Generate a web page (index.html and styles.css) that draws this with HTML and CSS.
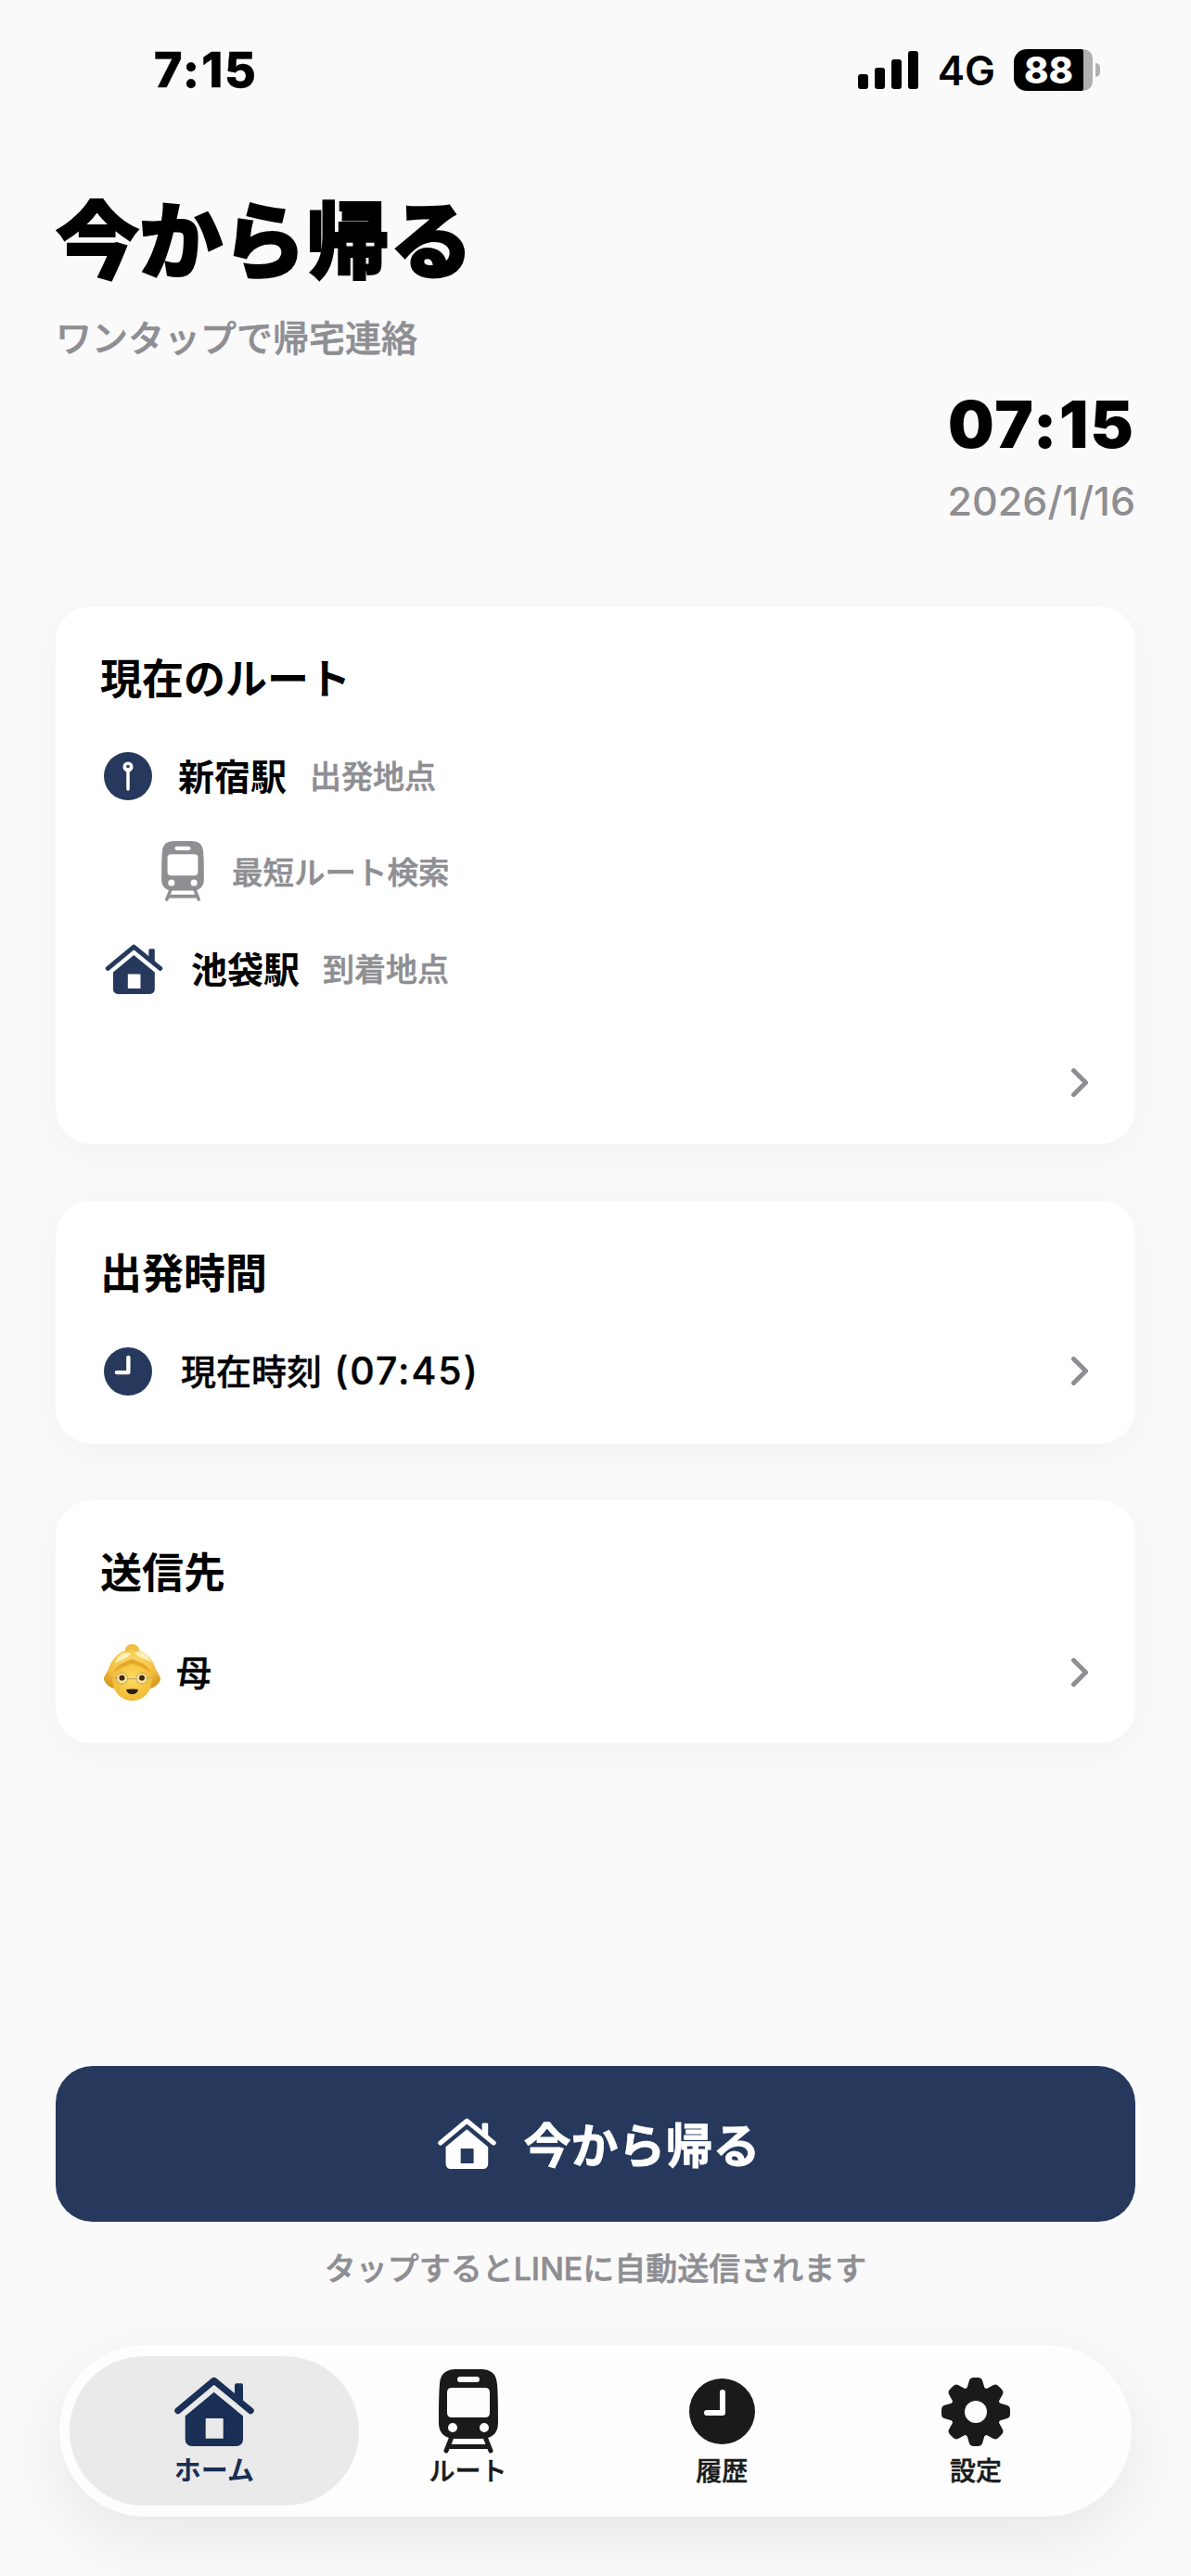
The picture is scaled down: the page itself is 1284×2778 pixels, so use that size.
FILE: index.html
```html
<!DOCTYPE html>
<html lang="ja">
<head>
<meta charset="utf-8">
<title>今から帰る</title>
<link rel="stylesheet" href="styles.css">
</head>
<body>
<svg class="sprite" aria-hidden="true">
  <defs>
    <symbol id="i-home" viewBox="0 0 86 75">
      <path class="fill" d="M65 24V9.300a2 2 0 0 1 2-2h5a2 2 0 0 1 2 2V32z"/>
      <path class="roof" d="M3.800 36.700 42.700 4.300 82.200 36.700"/>
      <path class="fill" fill-rule="evenodd" d="M42.700 16.700 74 42.500V68a7 7 0 0 1-7 7H18.700a7 7 0 0 1-7-7V42.500zM33.700 45V66.700H52.700V46a1 1 0 0 0-1-1z"/>
    </symbol>
    <symbol id="i-train" viewBox="0 0 64 91">
      <path class="fill" fill-rule="evenodd" d="M20 0H44C58 0 62 6 63 16 64 28 64 46 64 58 64 70 56 75 46 75H18C8 75 0 70 0 58 0 46 0 28 1 16 2 6 6 0 20 0ZM23 8a3 3 0 0 0 0 6H41a3 3 0 0 0 0-6ZM14 20Q9 20 9 25V47Q9 52 14 52H50Q55 52 55 47V25Q55 20 50 20ZM15 58a5 5 0 1 0 0 10 5 5 0 0 0 0-10ZM49 58a5 5 0 1 0 0 10 5 5 0 0 0 0-10Z"/>
      <path class="rail" d="M14 73 8 88M50 73 56 88M11 83.500H53"/>
    </symbol>
    <symbol id="i-clock" viewBox="0 0 71 71">
      <circle class="fill" cx="35.500" cy="35.500" r="35.500"/>
      <path class="hand" d="M36 15V37H19"/>
    </symbol>
    <symbol id="i-gear" viewBox="0 0 74 74">
      <g transform="translate(37 37)">
        <circle class="fill" r="27.500"/>
        <path class="fill" d="M-10-24-7-34Q-6-37-2-37H2Q6-37 7-34L10-24Z"/>
        <path class="fill" transform="rotate(45)" d="M-10-24-7-34Q-6-37-2-37H2Q6-37 7-34L10-24Z"/>
        <path class="fill" transform="rotate(90)" d="M-10-24-7-34Q-6-37-2-37H2Q6-37 7-34L10-24Z"/>
        <path class="fill" transform="rotate(135)" d="M-10-24-7-34Q-6-37-2-37H2Q6-37 7-34L10-24Z"/>
        <path class="fill" transform="rotate(180)" d="M-10-24-7-34Q-6-37-2-37H2Q6-37 7-34L10-24Z"/>
        <path class="fill" transform="rotate(225)" d="M-10-24-7-34Q-6-37-2-37H2Q6-37 7-34L10-24Z"/>
        <path class="fill" transform="rotate(270)" d="M-10-24-7-34Q-6-37-2-37H2Q6-37 7-34L10-24Z"/>
        <path class="fill" transform="rotate(315)" d="M-10-24-7-34Q-6-37-2-37H2Q6-37 7-34L10-24Z"/>
        <circle class="hole" r="12"/>
      </g>
    </symbol>
    <symbol id="i-chevron" viewBox="0 0 18 31">
      <path class="chev" d="M2.500 2.500 15.500 15.500 2.500 28.500"/>
    </symbol>
    <radialGradient id="hair" cx="50%" cy="30%" r="70%">
      <stop offset="0" stop-color="#fbd96a"/>
      <stop offset=".6" stop-color="#f2c043"/>
      <stop offset="1" stop-color="#d99a20"/>
    </radialGradient>
    <radialGradient id="skin" cx="50%" cy="45%" r="60%">
      <stop offset="0" stop-color="#fddc62"/>
      <stop offset="1" stop-color="#f1b62f"/>
    </radialGradient>
  </defs>
</svg>

<div class="page">
  <div class="status">
    <span class="clock-text">7:15</span>
    <div class="status-right">
      <div class="signal"><i class="b1"></i><i class="b2"></i><i class="b3"></i><i class="b4"></i></div>
      <span class="net">4G</span>
      <div class="battery"><span class="level">88</span><span class="rest"></span></div>
      <span class="nub"></span>
    </div>
  </div>

  <header class="head">
    <h1 class="title">今から帰る</h1>
    <p class="sub">ワンタップで帰宅連絡</p>
    <div class="now">
      <div class="now-time">07:15</div>
      <div class="now-date">2026/1/16</div>
    </div>
  </header>

  <main class="cards">
    <section class="card">
      <h2 class="card-title">現在のルート</h2>
      <div class="route">
        <div class="row">
          <svg class="badge" viewBox="0 0 52 52"><circle class="navy" cx="26" cy="26" r="26"/><path class="pin-stick" d="M26 18V40"/><circle class="pin-head" cx="26" cy="16" r="5.500"/><circle class="navy" cx="26" cy="15.500" r="1.800"/></svg>
          <span class="place place-a">新宿駅</span>
          <span class="hint">出発地点</span>
        </div>
        <div class="row row-train">
          <svg class="train-grey"><use href="#i-train"/></svg>
          <span class="hint hint-train">最短ルート検索</span>
        </div>
        <div class="row row-home">
          <svg class="home-navy"><use href="#i-home"/></svg>
          <span class="place place-b">池袋駅</span>
          <span class="hint">到着地点</span>
        </div>
      </div>
      <div class="card-foot"><svg class="chevron"><use href="#i-chevron"/></svg></div>
    </section>

    <section class="card">
      <h2 class="card-title">出発時間</h2>
      <div class="row row-link">
        <svg class="badge navy-icon"><use href="#i-clock"/></svg>
        <span class="value value-time">現在時刻 <span class="latin">(07:45)</span></span>
        <svg class="chevron"><use href="#i-chevron"/></svg>
      </div>
    </section>

    <section class="card">
      <h2 class="card-title">送信先</h2>
      <div class="row row-link row-person">
        <svg class="emoji" viewBox="0 0 61 61" role="img" aria-label="おばあさん">
          <circle cx="30.500" cy="8" r="8" fill="#f0bd3f"/>
          <path d="M30.500 6C16 6 8 17 5 27 2 33 0 35 0 38 2 45 9 48 15 49H46C52 48 59 45 61 38 61 35 59 33 56 27 53 17 45 6 30.500 6Z" fill="url(#hair)"/>
          <path d="M12 21C14 12 22 7 29 10 28 15 18 16 12 21ZM33 9C40 6 49 12 51 20 45 15 36 15 33 9Z" fill="#fff3c4" opacity=".9"/>
          <path d="M9 36C9 26 18 18 30.500 18 43 18 52 26 52 36 52 51 43 61 30.500 61 18 61 9 51 9 36Z" fill="url(#skin)"/>
          <path d="M10 31C13 23 23 19 30.500 16 38 19 48 23 51 31 45 26 37 23.500 30.500 21 24 23.500 16 26 10 31Z" fill="#e4a92c"/>
          <circle cx="19.500" cy="37" r="6" fill="#fdeeb0" fill-opacity=".7" stroke="#b9a06a" stroke-width="1"/>
          <circle cx="41" cy="37" r="6" fill="#fdeeb0" fill-opacity=".7" stroke="#b9a06a" stroke-width="1"/>
          <path d="M25.500 37.500H35M13.500 37 9.500 36M47 37 51.500 36" stroke="#b9a06a" stroke-width="1" fill="none"/>
          <circle cx="19.500" cy="36.500" r="3" fill="#3c2a16"/>
          <circle cx="41" cy="36.500" r="3" fill="#3c2a16"/>
          <path d="M24 49C27 48.200 34 48.200 37 49 36 53 33.500 54 30.500 54 27.500 54 25 53 24 49Z" fill="#2f1e10"/>
        </svg>
        <span class="value value-person">母</span>
        <svg class="chevron"><use href="#i-chevron"/></svg>
      </div>
    </section>
  </main>

  <button class="cta" type="button">
    <svg class="cta-icon"><use href="#i-home"/></svg>
    <span>今から帰る</span>
  </button>
  <p class="note">タップするとLINEに自動送信されます</p>

  <nav class="tabs">
    <a class="tab tab-active"><svg class="tab-home"><use href="#i-home"/></svg><span class="tab-label">ホーム</span></a>
    <a class="tab"><svg class="tab-train"><use href="#i-train"/></svg><span class="tab-label">ルート</span></a>
    <a class="tab"><svg class="tab-clock"><use href="#i-clock"/></svg><span class="tab-label">履歴</span></a>
    <a class="tab"><svg class="tab-gear"><use href="#i-gear"/></svg><span class="tab-label">設定</span></a>
  </nav>
</div>
</body>
</html>
```
FILE: styles.css
```css
* { box-sizing: border-box; }
html, body { margin: 0; padding: 0; }
body {
  width: 1284px;
  height: 2778px;
  overflow: hidden;
  background: #fafafa;
  font-family: "Inter", "Noto Sans CJK JP", sans-serif;
  color: #000;
}
.sprite { position: absolute; width: 0; height: 0; overflow: hidden; }
.fill { fill: currentColor; }
.roof { fill: none; stroke: currentColor; stroke-width: 7; stroke-linecap: round; stroke-linejoin: round; }
.rail { fill: none; stroke: currentColor; stroke-width: 5; stroke-linecap: round; }
.hand { fill: none; stroke: #fff; stroke-width: 6; stroke-linecap: round; stroke-linejoin: round; }
.hole { fill: #fdfdfd; }
.chev { fill: none; stroke: #8e8e93; stroke-width: 5; stroke-linecap: round; stroke-linejoin: miter; }
.navy { fill: #26395d; }
.pin-head { fill: #fff; }
.pin-stick { stroke: #fff; stroke-width: 3.500; stroke-linecap: round; }

.page {
  height: 2778px;
  display: flex;
  flex-direction: column;
  padding-bottom: 64px;
}

/* status bar */
.status {
  display: flex;
  justify-content: space-between;
  align-items: center;
  padding: 53px 98px 0 166px;
  height: 98px;
}
.clock-text { font-size: 52px; font-weight: 800; line-height: 48px; letter-spacing: 2px; -webkit-text-stroke: .5px #000; }
.status-right { display: flex; align-items: center; }
.signal { display: flex; align-items: flex-end; gap: 7px; height: 41px; }
.signal i { display: block; width: 11px; background: #000; border-radius: 3px; }
.signal .b1 { height: 16px; }
.signal .b2 { height: 23px; }
.signal .b3 { height: 32px; }
.signal .b4 { height: 41px; }
.net { font-size: 44px; font-weight: 600; line-height: 44px; margin-left: 21px; margin-right: 20px; }
.battery { display: flex; width: 85px; height: 45px; }
.level {
  width: 75px;
  background: #000;
  color: #fff;
  font-size: 40px;
  font-weight: 800;
  line-height: 45px;
  text-align: center;
  border-radius: 14px 2px 2px 14px;
}
.rest { flex: 1; background: #b0b0b0; border-radius: 0 14px 14px 0; }
.nub { width: 5px; height: 15px; margin-left: 3px; background: #b0b0b0; border-radius: 0 8px 8px 0; }

/* header */
.head { padding: 118px 60px 0; }
.title { margin: 0; font-size: 90px; line-height: 90px; font-weight: 900; -webkit-text-stroke: 2px #000; }
.sub { margin: 39px 0 0; font-size: 39px; line-height: 40px; font-weight: 500; color: #8e8e93; -webkit-text-stroke: .6px #8e8e93; }
.now { margin-top: 38px; text-align: right; }
.now-time { font-size: 70px; line-height: 70px; font-weight: 900; letter-spacing: 2px; }
.now-date { margin-top: 25px; font-size: 43px; line-height: 44px; font-weight: 500; color: #8e8e93; }

/* cards */
.cards {
  flex: 1;
  display: flex;
  flex-direction: column;
  gap: 61px;
  padding: 92px 60px 0;
}
.card {
  background: #fff;
  border-radius: 38px;
  padding: 57px 51px 52px 48px;
  box-shadow: 0 8px 40px rgba(0, 0, 0, .04);
}
.card-title { margin: 0 0 56px; font-size: 45px; line-height: 44px; font-weight: 700; }
.route { display: flex; flex-direction: column; margin-top: 2px; }
.row { display: flex; align-items: center; }
.badge { width: 52px; height: 52px; margin-left: 4px; flex: none; }
.navy-icon { color: #26395d; }
.place { padding-top: 2px; font-size: 39px; line-height: 50px; font-weight: 600; }
.place-a { margin-left: 28px; }
.place-b { margin-left: 30px; }
.hint { padding-top: 2px; font-size: 34px; line-height: 50px; font-weight: 500; color: #8e8e93; margin-left: 25px; -webkit-text-stroke: .6px #8e8e93; }
.row-train { margin-top: 44px; margin-left: 66px; }
.train-grey { width: 46px; height: 65px; color: #8e8e93; flex: none; }
.hint-train { margin-left: 30px; font-size: 33.500px; }
.row-home { margin-top: 46px; margin-left: 5px; }
.home-navy { width: 63px; height: 54px; color: #26395d; flex: none; }
.card-foot { display: flex; justify-content: flex-end; margin-top: 80px; margin-bottom: -1px; }
.chevron { width: 18px; height: 31px; flex: none; display: block; }
.row-link { min-height: 52px; }
.value { flex: 1; font-size: 38px; line-height: 52px; font-weight: 500; -webkit-text-stroke: .4px #000; }
.latin { margin-left: 3px; font-size: 41px; letter-spacing: 2px; }
.value-time { margin-left: 31px; }
.value-person { margin-left: 17px; }
.row-person { margin-left: 4px; margin-top: -2px; margin-bottom: -6px; }
.emoji { width: 61px; height: 61px; flex: none; }

/* call to action */
.cta {
  display: flex;
  align-items: center;
  justify-content: center;
  gap: 29px;
  height: 168px;
  margin: 0 60px;
  padding: 0 0 2px 8px;
  border: 0;
  border-radius: 40px;
  background: #26395d;
  color: #fff;
  font-family: inherit;
  font-size: 51px;
  font-weight: 700;
  -webkit-text-stroke: .8px #fff;
}
.cta-icon { width: 63px; height: 55px; color: #fff; }
.note { margin: 34px 0 0; text-align: center; font-size: 34px; line-height: 34px; font-weight: 500; color: #8e8e93; -webkit-text-stroke: .6px #8e8e93; }

/* tab bar */
.tabs {
  display: flex;
  height: 185px;
  margin: 65px 64px 0;
  padding: 12px 31px 12px 30px;
  background: #fdfdfd;
  border-radius: 92px;
  box-shadow: 0 24px 70px rgba(0, 0, 0, .08);
}
.tab {
  position: relative;
  width: 274px;
  display: flex;
  flex-direction: column;
  align-items: center;
  color: #1a1a1a;
}
.tab-active { color: #1a2f55; }
.tab-active::before {
  content: "";
  position: absolute;
  top: 0;
  bottom: 0;
  left: -19px;
  right: -19px;
  background: #eaeaea;
  border-radius: 80px;
}
.tab svg { position: relative; flex: none; }
.tab-label { position: absolute; top: 109px; font-size: 28px; line-height: 30px; font-weight: 500; white-space: nowrap; -webkit-text-stroke: .5px currentColor; }
.tab-active .tab-label { font-size: 29px; font-weight: 700; -webkit-text-stroke: 0; }
.tab-home { width: 86px; height: 75px; margin-top: 22px; }
.tab-train { width: 64px; height: 91px; margin-top: 14px; }
.tab-clock { width: 71px; height: 71px; margin-top: 24px; }
.tab-gear { width: 74px; height: 74px; margin-top: 23px; }
```
